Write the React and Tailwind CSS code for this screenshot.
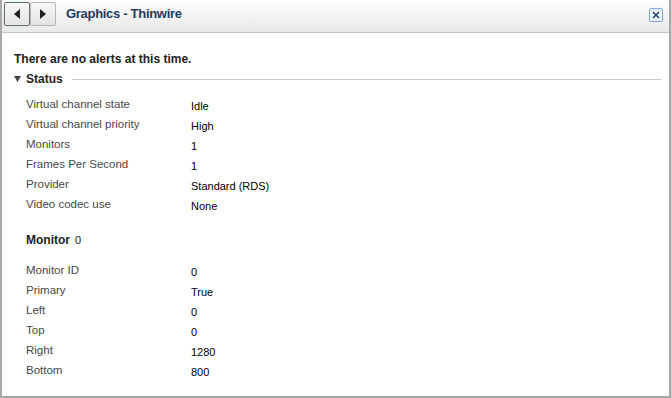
import React from 'react';

const statusRows = [
  ['Virtual channel state', 'Idle'],
  ['Virtual channel priority', 'High'],
  ['Monitors', '1'],
  ['Frames Per Second', '1'],
  ['Provider', 'Standard (RDS)'],
  ['Video codec use', 'None'],
];

const monitorRows = [
  ['Monitor ID', '0'],
  ['Primary', 'True'],
  ['Left', '0'],
  ['Top', '0'],
  ['Right', '1280'],
  ['Bottom', '800'],
];

function Row({ label, value }) {
  return (
    <div className="flex h-5 items-start">
      <div className="w-[165px] pt-[1px] text-[11.5px] text-[#474747]">{label}</div>
      <div className="pt-[3px] text-[11px] text-black">{value}</div>
    </div>
  );
}

export default function App() {
  return (
    <div
      className="w-[671px] h-[398px] bg-white border-2 border-t-0 border-[#a8a8a8] flex flex-col text-[12px]"
      style={{ fontFamily: '"Liberation Sans", Arial, sans-serif' }}
    >
      {/* header */}
      <div className="h-[33px] shrink-0 flex items-center bg-gradient-to-b from-[#fdfdfd] to-[#e9e9e9] border-b border-[#c4c4c4] pl-[2px] pr-[4px]">
        <div className="flex mt-[-4px]">
          <button className="w-[26px] h-[24px] flex items-center justify-center rounded-[2px] border border-[#6e6e6e] bg-gradient-to-b from-[#f7f7f7] to-[#e4e4e4] shadow-[0_0_2px_#9fd1f0]">
            <svg width="6" height="10" viewBox="0 0 6 10"><path d="M6 0L0 5l6 5z" fill="#222" /></svg>
          </button>
          <button className="w-[26px] h-[24px] flex items-center justify-center rounded-[2px] border border-[#b5b5b5] bg-gradient-to-b from-[#f7f7f7] to-[#e4e4e4]">
            <svg width="6" height="10" viewBox="0 0 6 10"><path d="M0 0l6 5-6 5z" fill="#222" /></svg>
          </button>
        </div>
        <div className="ml-[10px] mt-[-4px] text-[13px] tracking-[-0.3px] font-bold text-[#1e3a5f]">Graphics - Thinwire</div>
        <div className="ml-auto mr-[2px] mt-[-3px] w-[14px] h-[14px] rounded-[2px] border border-[#7ea6dc] bg-[#eef4fc] flex items-center justify-center">
          <svg width="8" height="8" viewBox="0 0 8 8"><path d="M1 1l6 6M7 1l-6 6" stroke="#1f3f7a" strokeWidth="1.6" /></svg>
        </div>
      </div>

      {/* body */}
      <div className="pl-[12px] pr-[8px] pt-[17px]">
        <div className="text-[12px] font-bold text-[#222]">There are no alerts at this time.</div>
        <div className="flex items-center mt-[2px]">
          <svg width="7" height="6" viewBox="0 0 7 6" className="mr-[5px]"><path d="M0 0h7L3.5 6z" fill="#444" /></svg>
          <span className="text-[12px] font-bold text-[#222]">Status</span>
          <div className="flex-1 h-px bg-[#c8c8c8] ml-[9px] mt-[1px]" />
        </div>

        <div className="pl-[12px] mt-[7px]">
          {statusRows.map(([l, v]) => (
            <Row key={l} label={l} value={v} />
          ))}

          <div className="flex items-baseline mt-[16px] mb-[12px]">
            <span className="text-[12px] font-bold text-[#222]">Monitor</span>
            <span className="ml-[5px] text-[11px] text-[#222]">0</span>
          </div>

          {monitorRows.map(([l, v]) => (
            <Row key={l} label={l} value={v} />
          ))}
        </div>
      </div>
    </div>
  );
}
